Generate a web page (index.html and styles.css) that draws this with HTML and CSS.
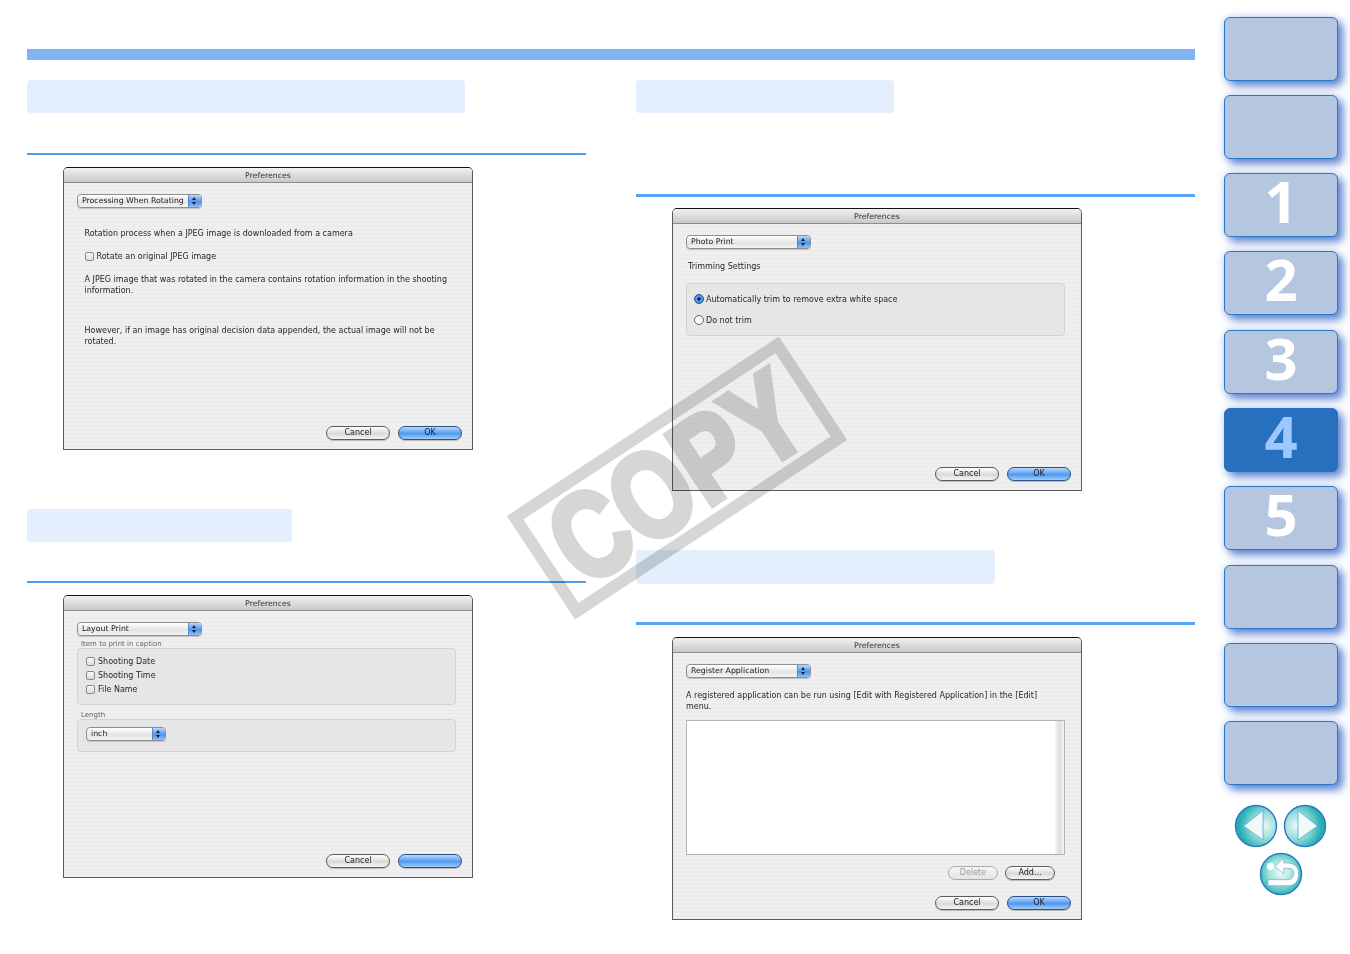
FILE: index.html
```html
<!DOCTYPE html>
<html lang="en">
<head>
<meta charset="utf-8">
<title>Preferences</title>
<link rel="stylesheet" href="styles.css">
</head>
<body>
<div class="page">
  <main class="main">
    <div class="topbar"></div>
    <div class="columns">
      <section class="col">
        <div class="pill pill-a"></div>
        <div class="rule rule-gap-40"></div>
        <div class="win">
          <div class="win-title">Preferences</div>
          <div class="win-body">
            <div class="sel sel-main"><span class="sel-label">Processing When Rotating</span><span class="sel-arrows"></span></div>
            <p class="txt t1a">Rotation process when a JPEG image is downloaded from a camera</p>
            <label class="chk t1b"><span class="box"></span>Rotate an original JPEG image</label>
            <p class="txt t1c">A JPEG image that was rotated in the camera contains rotation information in the shooting<br>information.</p>
            <p class="txt t1d">However, if an image has original decision data appended, the actual image will not be<br>rotated.</p>
            <div class="btns"><span class="btn">Cancel</span><span class="btn btn-ok">OK</span></div>
          </div>
        </div>
        <div class="pill pill-b"></div>
        <div class="rule rule-gap-39"></div>
        <div class="win">
          <div class="win-title">Preferences</div>
          <div class="win-body">
            <div class="sel sel-main"><span class="sel-label">Layout Print</span><span class="sel-arrows"></span></div>
            <div class="cap cap-a">Item to print in caption</div>
            <div class="group group-a">
              <label class="chk"><span class="box"></span>Shooting Date</label>
              <label class="chk"><span class="box"></span>Shooting Time</label>
              <label class="chk"><span class="box"></span>File Name</label>
            </div>
            <div class="cap cap-b">Length</div>
            <div class="group group-b">
              <div class="sel sel-small"><span class="sel-label">inch</span><span class="sel-arrows"></span></div>
            </div>
            <div class="btns"><span class="btn">Cancel</span><span class="btn btn-ok"></span></div>
          </div>
        </div>
      </section>
      <section class="col">
        <div class="pill pill-c"></div>
        <div class="rule rule-thick rule-gap-81"></div>
        <div class="win win-r">
          <div class="win-title">Preferences</div>
          <div class="win-body">
            <div class="sel sel-main"><span class="sel-label">Photo Print</span><span class="sel-arrows"></span></div>
            <p class="txt t3a">Trimming Settings</p>
            <div class="group group-c">
              <label class="radio"><span class="dot dot-on"></span>Automatically trim to remove extra white space</label>
              <label class="radio"><span class="dot"></span>Do not trim</label>
            </div>
            <div class="btns"><span class="btn">Cancel</span><span class="btn btn-ok">OK</span></div>
          </div>
        </div>
        <div class="pill pill-d"></div>
        <div class="rule rule-thick rule-gap-38"></div>
        <div class="win win-r">
          <div class="win-title">Preferences</div>
          <div class="win-body">
            <div class="sel sel-main"><span class="sel-label">Register Application</span><span class="sel-arrows"></span></div>
            <p class="txt t4a">A registered application can be run using [Edit with Registered Application] in the [Edit]<br>menu.</p>
            <div class="list"><div class="list-scroll"></div></div>
            <div class="btns btns-sub"><span class="btn btn-off btn-sm">Delete</span><span class="btn btn-sm">Add...</span></div>
            <div class="btns btns-after"><span class="btn">Cancel</span><span class="btn btn-ok">OK</span></div>
          </div>
        </div>
      </section>
    </div>
  </main>
  <nav class="side">
    <div class="tabs">
      <a class="tab"></a>
      <a class="tab"></a>
      <a class="tab">1</a>
      <a class="tab">2</a>
      <a class="tab">3</a>
      <a class="tab tab-on">4</a>
      <a class="tab">5</a>
      <a class="tab"></a>
      <a class="tab"></a>
      <a class="tab"></a>
    </div>
    <div class="pager">
      <svg class="round" viewBox="0 0 44 44" aria-hidden="true">
        <defs>
          <radialGradient id="gl" cx="0.72" cy="0.5" r="0.62"><stop offset="0" stop-color="#eaf8f6"/><stop offset="0.55" stop-color="#8fdad6"/><stop offset="1" stop-color="#25aeb4"/></radialGradient>
          <radialGradient id="gr" cx="0.28" cy="0.5" r="0.62"><stop offset="0" stop-color="#eaf8f6"/><stop offset="0.55" stop-color="#8fdad6"/><stop offset="1" stop-color="#25aeb4"/></radialGradient>
          <radialGradient id="gc" cx="0.5" cy="0.45" r="0.58"><stop offset="0" stop-color="#f4fcfb"/><stop offset="0.5" stop-color="#a4e2dd"/><stop offset="1" stop-color="#25aeb4"/></radialGradient>
        </defs>
        <circle cx="22" cy="22" r="20.5" fill="url(#gl)" stroke="#2a78c0" stroke-width="1.4"/>
        <polygon points="9.5,22 29,6.5 29,36" fill="#eef9f8" stroke="#5aa5d8" stroke-width="0.8"/>
      </svg>
      <svg class="round" viewBox="0 0 44 44" aria-hidden="true">
        <circle cx="22" cy="22" r="20.5" fill="url(#gr)" stroke="#2a78c0" stroke-width="1.4"/>
        <polygon points="34.5,22 15,6.5 15,36" fill="#eef9f8" stroke="#5aa5d8" stroke-width="0.8"/>
      </svg>
      <svg class="round round-back" viewBox="0 0 44 44" aria-hidden="true">
        <circle cx="22" cy="22" r="20.5" fill="url(#gc)" stroke="#2a78c0" stroke-width="1.4"/>
        <circle cx="11.5" cy="14.3" r="3.6" fill="#fff"/>
        <path d="M16.3 14.3 L24.7 6 V11 H28 C35 11 39.7 15 39.7 21 C39.7 29 36 33.7 30 33.7 H9 V27.7 H29 C33 27.7 34.7 25 34.7 21 C34.7 18 33 16.3 29.7 16.3 H24.7 V22 Z" fill="#fff" stroke="#5aa5d8" stroke-width="0.6"/>
      </svg>
    </div>
  </nav>
  <div class="stamp"><span class="stamp-text">COPY</span></div>
</div>
</body>
</html>
```
FILE: styles.css
```css
* { box-sizing: border-box; }
html, body { margin: 0; padding: 0; background: #fff; }
.page { position: relative; display: flex; width: 1350px; height: 954px; overflow: hidden; font-family: "DejaVu Sans", sans-serif; }
.main { width: 1195px; padding: 49px 0 0 27px; flex: none; }
.topbar { height: 11px; background: #80b5f5; }
.columns { display: grid; grid-template-columns: 559px 559px; column-gap: 50px; margin-top: 20px; }

.pill { height: 33px; background: #e3effc; border-radius: 4px; }
.pill-a { width: 438px; }
.pill-b { width: 265px; margin-top: 59px; }
.pill-c { width: 258px; }
.pill-d { width: 359px; margin-top: 59px; height: 34px; }

.rule { height: 2px; background: #4d9fee; margin-bottom: 12px; }
.rule-thick { height: 3px; background: #55a4f5; margin-bottom: 11px; }
.rule-gap-40 { margin-top: 40px; }
.rule-gap-39 { margin-top: 39px; }
.rule-gap-81 { margin-top: 81px; }
.rule-gap-38 { margin-top: 38px; margin-bottom: 12px; }

.win { width: 410px; height: 283px; margin-left: 36px; border: 1px solid #5a5a5a; border-top-color: #111; border-radius: 5px 5px 0 0; display: flex; flex-direction: column; overflow: hidden; color: #262626; font-size: 8px; line-height: 11px; }
.win-title { height: 15px; flex: none; text-align: center; line-height: 15px; font-size: 7.8px; background: linear-gradient(#f1f1f1, #c9c9c9); border-bottom: 1px solid #8c8c8c; color: #333; filter: blur(0.25px); }
.win-body { flex: 1; display: flex; flex-direction: column; align-items: flex-start; padding: 11px 10px 9px 13px; background: repeating-linear-gradient(#efefef 0 2px, #ececec 2px 4px); }
.win-body > * { flex: none; }

.sel { display: flex; height: 14px; border: 1px solid #8f8f8f; border-radius: 4px; background: linear-gradient(#fff, #e4e4e4 60%, #f4f4f4); overflow: hidden; box-shadow: 0 1px 0 #c4c4c4; filter: blur(0.2px); font-size: 7.8px; }
.sel-main { width: 125px; }
.sel-small { width: 80px; }
.sel-label { flex: 1; padding-left: 4px; line-height: 12px; white-space: nowrap; color: #222; }
.sel-arrows { position: relative; width: 13px; flex: none; background: linear-gradient(#bcd8fb, #4f93ea 55%, #8fc0f7); border-left: 1px solid #5a88c8; }
.sel-arrows::before, .sel-arrows::after { content: ""; position: absolute; left: 3px; border-left: 2.5px solid transparent; border-right: 2.5px solid transparent; }
.sel-arrows::before { top: 2px; border-bottom: 3px solid #123; }
.sel-arrows::after { bottom: 2px; border-top: 3px solid #123; }

.txt { margin: 0; white-space: nowrap; filter: blur(0.2px); }
.t1a { margin: 20px 0 0 7.5px; }
.t1b { margin: 10px 0 0 7.5px; }
.t1c { margin: 11px 0 0 7.5px; }
.t1d { margin: 29px 0 0 7.5px; }
.t3a { margin: 12px 0 0 2px; }
.t4a { margin: 12px 0 0 0; }

.chk, .radio { display: flex; align-items: center; height: 14px; white-space: nowrap; filter: blur(0.2px); }
.box { width: 9px; height: 9px; margin-right: 3px; flex: none; border: 1px solid #8a8a8a; border-radius: 2px; background: linear-gradient(#f8f8f8, #dcdcdc); }
.dot { width: 10px; height: 10px; margin-right: 2px; flex: none; border: 1px solid #666; border-radius: 50%; background: linear-gradient(#f4f4f4, #fff); }
.dot-on { border-color: #24528f; background: radial-gradient(circle, #102040 0 1.4px, #6aa4ec 2px, #2f6fc8 100%); }

.cap { font-size: 7px; line-height: 8px; color: #666; white-space: nowrap; filter: blur(0.2px); }
.cap-a { margin: 4px 0 0 4px; }
.cap-b { margin: 6px 0 0 4px; }
.group { width: 379px; border: 1px solid #d2d2d2; border-radius: 4px; background: #e6e6e6; }
.group-a { height: 57px; padding: 5px 0 0 8px; }
.group-b { height: 33px; padding: 7px 0 0 8px; }
.group-c { height: 53px; margin-top: 11px; padding: 8px 0 0 7px; }
.group-c .radio { margin-bottom: 7px; }

.list { position: relative; display: flex; justify-content: flex-end; width: 379px; height: 135px; margin-top: 8px; background: #fff; border: 1px solid #b4b4b4; }
.list-scroll { width: 9px; background: linear-gradient(90deg, #f4f4f4, #dedede 50%, #f2f2f2); }

.btns { display: flex; gap: 8px; align-self: flex-end; margin-top: auto; }
.btns-sub { margin-top: 11px; gap: 7px; margin-right: 16px; }
.btn { width: 64px; height: 14px; border: 1px solid #5c5c5c; border-radius: 7px; text-align: center; line-height: 12px; color: #222; background: linear-gradient(#fff, #dadada 55%, #f4f4f4); box-shadow: 0 1px 0 #bcbcbc; filter: blur(0.2px); }
.btn-ok { border-color: #2c4f86; background: linear-gradient(#bcd8fb, #4f9af0 55%, #a2cdf9); }
.btn-sm { width: 50px; }
.btn-off { color: #999; border-color: #aaa; box-shadow: none; background: linear-gradient(#f4f4f4, #e4e4e4); }

.side { flex: none; width: 155px; padding: 16.5px 0 0 29px; }
.tabs { display: flex; flex-direction: column; gap: 14.33px; width: 114px; }
.tab { display: block; height: 64px; border: 1.6px solid #2a78c8; border-radius: 6px; background: #b4c6e0; box-shadow: 5px 5px 8px rgba(60, 105, 200, .8), 0 0 8px rgba(90, 130, 215, .3); text-align: center; color: #fff; font-family: "Open Sans", sans-serif; font-weight: 700; font-size: 58px; line-height: 54px; }
.tab-on { background: #2670bd; border-color: #2670bd; color: #9cc8ff; }

.pager { display: grid; grid-template-columns: 44px 44px; column-gap: 5px; row-gap: 4px; justify-content: start; margin: 18.5px 0 0 10px; }
.round { width: 44px; height: 44px; display: block; }
.round-back { grid-column: 1 / 3; justify-self: center; }

.stamp { position: absolute; left: 514px; top: 416px; width: 326px; height: 124px; display: flex; align-items: center; justify-content: center; border: 12px solid #d6d6d6; transform: rotate(-33.4deg); mix-blend-mode: multiply; pointer-events: none; }
.stamp-text { display: block; color: #d6d6d6; -webkit-text-stroke: 6px #d6d6d6; font-family: "Liberation Sans", sans-serif; font-weight: 700; font-size: 122px; line-height: 90px; transform: scaleX(0.8); }
```
